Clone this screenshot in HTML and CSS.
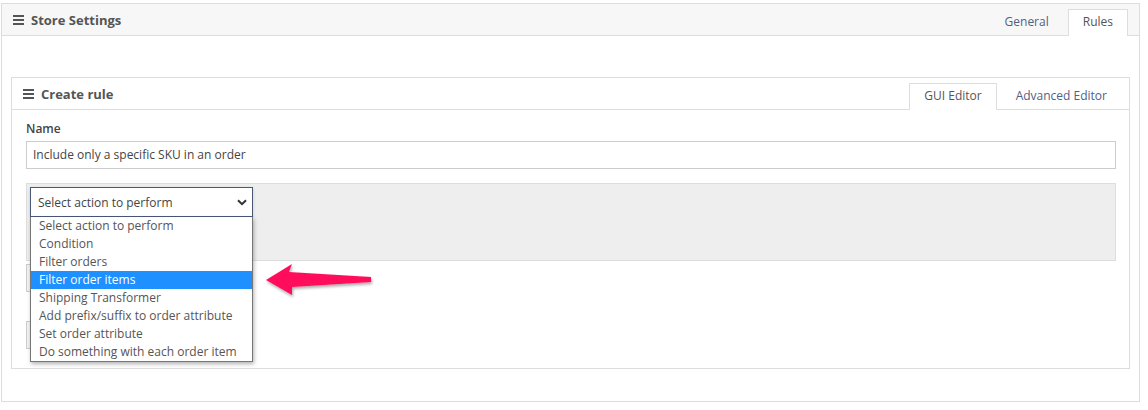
FILE: index.html
```html
<!DOCTYPE html>
<html>

<head>
    <meta charset="utf-8">
    <title>Store Settings</title>
    <link rel="stylesheet" href="styles.css">
</head>

<body>
    <div class="panel outer">
        <div class="panel-head">
            <h2 class="title"><span class="burger"></span>Store Settings</h2>
            <ul class="tabs">
                <li class="tab">General</li>
                <li class="tab active">Rules</li>
            </ul>
        </div>
        <div class="panel-body outer-body">

            <div class="panel inner">
                <div class="panel-head">
                    <h2 class="title"><span class="burger"></span>Create rule</h2>
                    <ul class="tabs">
                        <li class="tab active">GUI Editor</li>
                        <li class="tab">Advanced Editor</li>
                    </ul>
                </div>
                <div class="panel-body inner-body">
                    <label class="field-label">Name</label>
                    <div class="text-input">Include only a specific SKU in an order</div>

                    <div class="action-box">
                        <div class="select-wrap">
                            <div class="select">
                                <span>Select action to perform</span>
                                <svg class="chev" width="10" height="7" viewBox="0 0 10 7"><path d="M1 1.2 L5 5.2 L9 1.2" fill="none" stroke="#333" stroke-width="2"/></svg>
                            </div>
                            <ul class="options">
                                <li>Select action to perform</li>
                                <li>Condition</li>
                                <li>Filter orders</li>
                                <li class="hl">Filter order items</li>
                                <li>Shipping Transformer</li>
                                <li>Add prefix/suffix to order attribute</li>
                                <li>Set order attribute</li>
                                <li>Do something with each order item</li>
                            </ul>
                        </div>
                    </div>

                    <!-- buttons sit under the open dropdown -->
                    <div class="btn"></div>
                    <div class="btn second"></div>

                    <svg class="pointer" width="120" height="44" viewBox="0 0 120 44">
                        <defs>
                            <filter id="sh" x="-20%" y="-30%" width="140%" height="160%">
                                <feDropShadow dx="1" dy="2" stdDeviation="1.5" flood-color="#000" flood-opacity="0.35"/>
                            </filter>
                        </defs>
                        <polygon filter="url(#sh)" fill="#ff0f5c" points="6,19 32,3 29,11 111,16 111,21 32,26 32,34"/>
                    </svg>
                </div>
            </div>

        </div>
    </div>
</body>

</html>
```

FILE: styles.css
```css
body {
    margin: 0;
    padding: 3px 0 0 1px;
    font-family: "Open Sans", "Liberation Sans", sans-serif;
    font-size: 12px;
    color: #444;
}

ul {
    list-style: none;
    margin: 0;
    padding: 0;
}

.panel {
    border: 1px solid #ddd;
    background: #fff;
}

.outer {
    width: 1137px;
}

.panel-head {
    display: flex;
    justify-content: space-between;
    align-items: flex-end;
    height: 31px;
    border-bottom: 1px solid #ddd;
    padding-left: 11px;
    padding-right: 11px;
}

.outer > .panel-head {
    background: #f7f7f7;
}

.inner > .panel-head {
    padding-right: 3px;
}

.title {
    margin: 0;
    align-self: center;
    display: flex;
    align-items: center;
    font-size: 13px;
    font-weight: bold;
    color: #555;
}

.burger {
    display: inline-block;
    width: 11px;
    height: 2px;
    background: #555;
    box-shadow: 0 -4px 0 #555, 0 4px 0 #555;
    margin-right: 7px;
}

.tabs {
    display: flex;
}

.tab {
    height: 26px;
    line-height: 24px;
    padding: 0 18px;
    color: #4f5f86;
    font-size: 12px;
    border: 1px solid transparent;
    border-bottom: none;
    margin-bottom: -1px;
}

.tab.active {
    background: #fff;
    border-color: #ddd;
    color: #555;
    padding: 0 14px;
}

.outer-body {
    padding: 41px 9px 32px 9px;
}

.inner-body {
    position: relative;
    padding: 10px 13px 19px 14px;
}

.field-label {
    display: block;
    font-weight: 600;
    color: #444;
    line-height: 18px;
}

.text-input {
    margin-top: 3px;
    height: 26px;
    line-height: 26px;
    border: 1px solid #ccc;
    padding: 0 6px;
    color: #444;
}

.action-box {
    margin-top: 14px;
    height: 70px;
    border: 1px solid #ddd;
    background: #eee;
    padding: 3px;
}

.select-wrap {
    position: relative;
    width: 223px;
}

.select {
    display: flex;
    justify-content: space-between;
    align-items: center;
    height: 28px;
    border: 1px solid #4a5878;
    background: #fff;
    padding: 0 5px 0 7px;
    box-shadow: 0 1px 3px rgba(0, 0, 0, 0.15);
}

.options {
    position: absolute;
    left: 0;
    top: 30px;
    width: 221px;
    background: #fff;
    border: 1px solid #767676;
    border-top: none;
    box-shadow: 1px 2px 4px rgba(0, 0, 0, 0.3);
    z-index: 2;
}

.options li {
    height: 18px;
    line-height: 18px;
    padding-left: 8px;
    color: #555;
}

.options li.hl {
    background: #1e90ff;
    color: #fff;
}

.btn {
    margin-top: 3px;
    width: 110px;
    height: 26px;
    border: 1px solid #ccc;
    background: #f3f3f3;
}

.btn.second {
    margin-top: 29px;
}

.pointer {
    position: absolute;
    left: 248px;
    top: 151px;
}
```
